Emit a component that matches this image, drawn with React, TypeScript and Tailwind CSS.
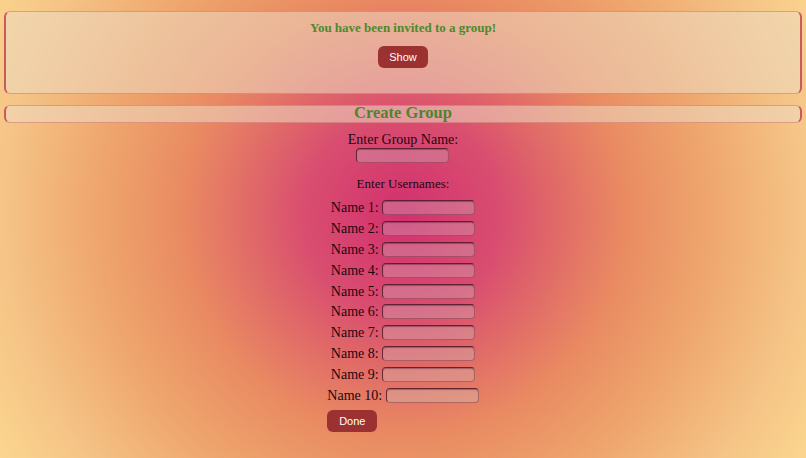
import React from "react";

const names = ["Name 1:", "Name 2:", "Name 3:", "Name 4:", "Name 5:", "Name 6:", "Name 7:", "Name 8:", "Name 9:", "Name 10:"];

function Box({ className, children }: { className: string; children?: React.ReactNode }) {
  return (
    <div
      className={
        "mx-[4px] rounded-[6px] border-x-2 border-y border-x-[#c95a5e] border-y-[rgba(200,90,90,0.45)] bg-[rgba(237,219,194,0.55)] " +
        className
      }
    >
      {children}
    </div>
  );
}

const inputCls =
  "w-[93px] h-[15px] rounded-[4px] border border-t-[rgba(75,20,35,0.85)] border-l-[rgba(75,20,35,0.8)] border-r-[rgba(110,45,60,0.45)] border-b-[rgba(110,45,60,0.45)] bg-[rgba(205,235,228,0.24)] shadow-[inset_0_1px_1px_rgba(60,0,20,0.35)]";

export default function App() {
  return (
    <div className="h-[458px] w-full overflow-hidden pt-[11px] font-['Liberation_Serif',serif] bg-[radial-gradient(circle_at_50%_215px,#d2306e_0px,#d94e70_100px,#e06868_150px,#e98a62_220px,#eea46c_300px,#f5c486_400px,#fcd890_480px)]">
      <Box className="h-[83px] flex flex-col items-center pt-[8px]">
        <p className="text-[13px] font-bold leading-[16px] text-[#4b8a2e]">You have been invited to a group!</p>
        <button className="mt-[10px] h-[22px] w-[50px] rounded-[6px] bg-[#9b3131] text-[11px] text-white font-['Liberation_Sans',sans-serif]">
          Show
        </button>
      </Box>
      <Box className="mt-[11px] h-[18px]">
        <h2 className="text-center text-[16.5px] font-bold leading-[14px] text-[#4b8530]">Create Group</h2>
      </Box>
      <div className="mx-auto w-fit flex flex-col items-center text-[#1c080f]">
        <p className="mt-[8px] text-[14px] leading-[17px]">Enter Group Name:</p>
        <input className={inputCls} />
        <p className="mt-[13px] text-[13px] leading-[16px]">Enter Usernames:</p>
        <div className="mt-[5.6px] flex flex-col items-center">
          {names.map((n) => (
            <div key={n} className="h-[20.8px] flex items-center">
              <span className="text-[14px] leading-[17px]">{n}</span>
              <input className={"ml-[3.5px] " + inputCls} />
            </div>
          ))}
        </div>
        <button className="self-start mt-[4.4px] h-[22px] w-[50px] rounded-[6px] bg-[#9b3131] text-[11px] text-white font-['Liberation_Sans',sans-serif]">
          Done
        </button>
      </div>
    </div>
  );
}
